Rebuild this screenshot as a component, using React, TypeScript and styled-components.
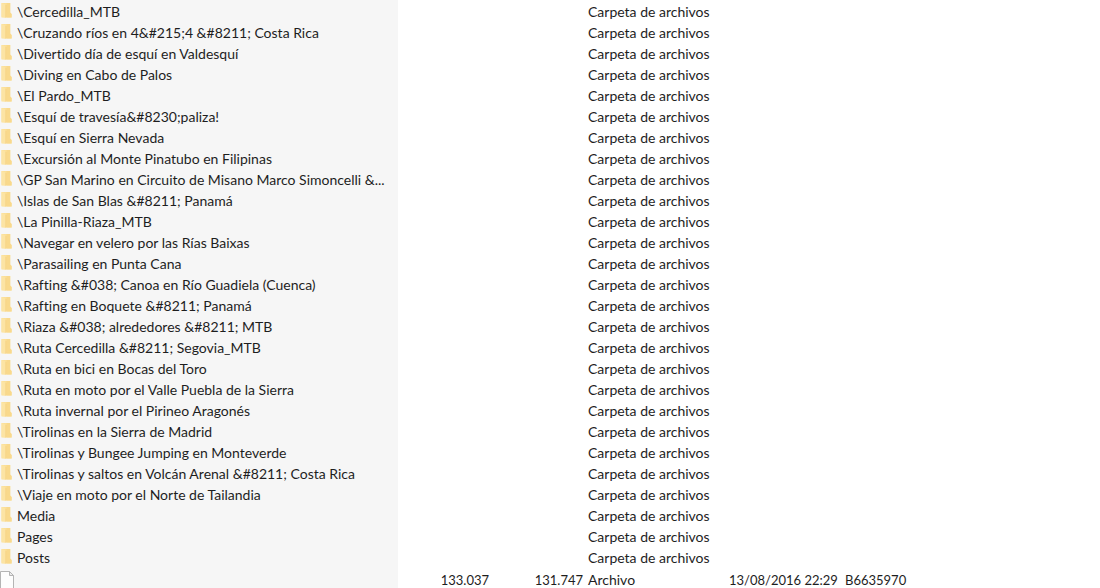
import React from "react";
import styled, { createGlobalStyle } from "styled-components";

const GlobalStyle = createGlobalStyle`
  body {
    margin: 0;
    overflow: hidden;
    background: linear-gradient(to right, #f6f6f6 398px, #ffffff 398px);
    color: #1e1e1e;
    font-family: Lato, "Open Sans", sans-serif;
    font-size: 14px;
    font-variant-ligatures: none;
    line-height: 20px;
  }
`;

const Page = styled.main`
  padding-top: 1px;
`;

const Listing = styled.table`
  width: 100%;
  table-layout: fixed;
  border-collapse: collapse;
`;

const Column = styled.col<{ $width?: number }>`
  width: ${({ $width }) => ($width ? `${$width}px` : "auto")};
`;

const Row = styled.tr<{ $height?: number }>`
  height: ${({ $height = 21 }) => $height}px;
`;

const Cell = styled.td`
  padding: 0;
  white-space: nowrap;
`;

const DataCell = styled(Cell)<{ $align?: "left" | "right" }>`
  padding-right: ${({ $align }) => ($align === "right" ? 5 : 0)}px;
  font-size: 13px;
  text-align: ${({ $align = "left" }) => $align};
`;

const Entry = styled.div`
  display: flex;
  align-items: center;
  gap: 4px;
`;

const IconSlot = styled.span<{ $width: number }>`
  display: flex;
  flex: none;
  width: ${({ $width }) => $width}px;

  svg {
    display: block;
    flex: none;
  }
`;

const FolderIcon = () => (
  <svg width="13" height="20" viewBox="0 0 13 20" aria-hidden="true">
    <path d="M1.5 1h8.7v9.5l1.4 1.4V15.5H1.5z" fill="#fbdf98" />
    <path d="M6.5 1H10.2v9.5l1.4 1.4V15.5H7z" fill="#f9d98c" />
    <path d="M1.5 1l4 1.6v13.2L1.5 14.8z" fill="#fce4a4" />
    <path d="M5.5 2.6l1 .8v12l-1 .4z" fill="#f5d282" />
  </svg>
);

const FileIcon = () => (
  <svg width="14" height="18" viewBox="0 0 14 18" aria-hidden="true">
    <path d="M.5 .5h9l4 4v13H.5z" fill="#fdfdfd" stroke="#b4b4b4" />
    <path d="M9.5 .5v4h4z" fill="#ececec" stroke="#b4b4b4" strokeLinejoin="round" />
  </svg>
);

const folders = [
  "\\Cercedilla_MTB",
  "\\Cruzando ríos en 4&#215;4 &#8211; Costa Rica",
  "\\Divertido día de esquí en Valdesquí",
  "\\Diving en Cabo de Palos",
  "\\El Pardo_MTB",
  "\\Esquí de travesía&#8230;paliza!",
  "\\Esquí en Sierra Nevada",
  "\\Excursión al Monte Pinatubo en Filipinas",
  "\\GP San Marino en Circuito de Misano Marco Simoncelli &...",
  "\\Islas de San Blas &#8211; Panamá",
  "\\La Pinilla-Riaza_MTB",
  "\\Navegar en velero por las Rías Baixas",
  "\\Parasailing en Punta Cana",
  "\\Rafting &#038; Canoa en Río Guadiela (Cuenca)",
  "\\Rafting en Boquete &#8211; Panamá",
  "\\Riaza &#038; alrededores &#8211; MTB",
  "\\Ruta Cercedilla &#8211; Segovia_MTB",
  "\\Ruta en bici en Bocas del Toro",
  "\\Ruta en moto por el Valle Puebla de la Sierra",
  "\\Ruta invernal por el Pirineo Aragonés",
  "\\Tirolinas en la Sierra de Madrid",
  "\\Tirolinas y Bungee Jumping en Monteverde",
  "\\Tirolinas y saltos en Volcán Arenal &#8211; Costa Rica",
  "\\Viaje en moto por el Norte de Tailandia",
  "Media",
  "Pages",
  "Posts",
];

export default function App() {
  return (
    <Page>
      <GlobalStyle />
      <Listing>
        <colgroup>
          <Column $width={398} />
          <Column $width={96} />
          <Column $width={94} />
          <Column $width={141} />
          <Column $width={116} />
          <Column />
        </colgroup>
        <tbody>
          {folders.map((name) => (
            <Row key={name}>
              <Cell>
                <Entry>
                  <IconSlot $width={13}>
                    <FolderIcon />
                  </IconSlot>
                  {name}
                </Entry>
              </Cell>
              <Cell />
              <Cell />
              <Cell>Carpeta de archivos</Cell>
              <Cell />
              <Cell />
            </Row>
          ))}
          <Row $height={23}>
            <Cell>
              <Entry>
                <IconSlot $width={14}>
                  <FileIcon />
                </IconSlot>
              </Entry>
            </Cell>
            <DataCell $align="right">133.037</DataCell>
            <DataCell $align="right">131.747</DataCell>
            <Cell>Archivo</Cell>
            <DataCell>13/08/2016 22:29</DataCell>
            <DataCell>B6635970</DataCell>
          </Row>
        </tbody>
      </Listing>
    </Page>
  );
}
